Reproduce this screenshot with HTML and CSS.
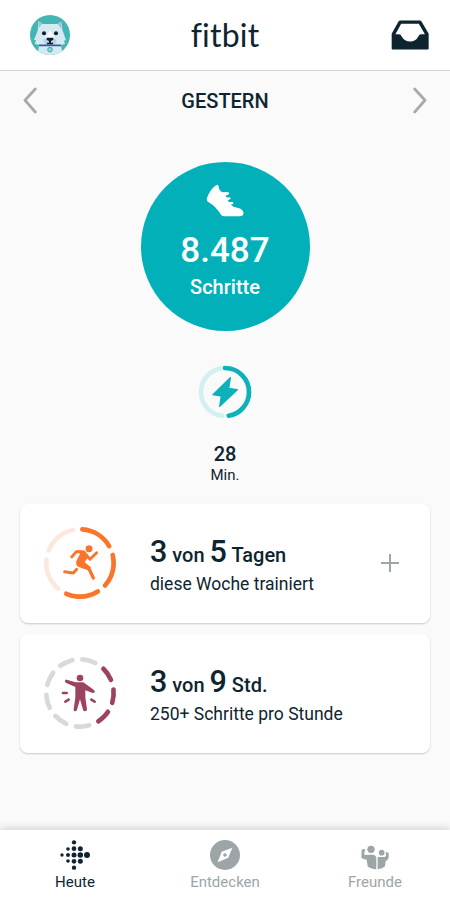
FILE: index.html
```html
<!DOCTYPE html>
<html lang="de">
<head>
<meta charset="utf-8">
<title>fitbit</title>
<link rel="stylesheet" href="styles.css">
</head>
<body>
<header class="topbar">
  <svg class="avatar" viewBox="90 44 120 120">
    <defs><clipPath id="round"><circle cx="150" cy="104" r="60"/></clipPath></defs>
    <g clip-path="url(#round)">
      <rect x="90" y="44" width="120" height="120" fill="#43b5b3"/>
      <path d="M115 62L128 71H172L184 64L187 88L198 119L192 121L195 131L183 134L188 170H112L117 134L104 130L108 120L102 118L113 91Z" fill="#d3eaf3"/>
      <path d="M115 62L127 70L116 84ZM184 64L173 70L184 86Z" fill="#a9bfd5"/>
      <path d="M150 88L166 118L150 133L134 118Z" fill="#f6fbfd"/>
      <path d="M130 118Q150 108 170 118L164 134H136Z" fill="#b8cfe3"/>
      <path d="M117 135H183" stroke="#315f9d" stroke-width="5"/>
      <circle cx="132" cy="99" r="6" fill="#101d31"/><circle cx="168" cy="99" r="6" fill="#101d31"/>
      <path d="M140 112H160V118L153 122V127H159V132H141V127H147V122L140 118Z" fill="#101d31"/>
      <circle cx="150" cy="148" r="7" fill="#8bd8d2" stroke="#42aaa9" stroke-width="3"/>
    </g>
  </svg>
  <h1 class="logo">fitbit</h1>
  <svg class="inbox" viewBox="64 63 112 88">
    <path fill="#0e2530" fill-rule="evenodd" d="M91 64H149Q152 64 154 67L175 103V147Q175 150 172 150H69Q66 150 66 147V103L86 67Q88 64 91 64ZM94 74L77 105H87Q93 105 96 112Q104 126 120 126Q137 126 144 112Q147 105 153 105H164L146 74Z"/>
  </svg>
</header>

<main class="content">
  <div class="daynav">
    <svg class="chevron" viewBox="0 0 14 27"><path d="M12.3 2L2 13.3L12.3 25"/></svg>
    <h2 class="day">GESTERN</h2>
    <svg class="chevron" viewBox="0 0 14 27"><path d="M1.7 2L12 13.3L1.7 25"/></svg>
  </div>

  <section class="steps">
    <svg class="shoe" viewBox="228 102 114 100"><path fill="#fff" d="M263 104Q266 106 266 112Q268 124 278 127L290 126Q297 126 298 130Q298 133 293 135L287 137L290 143L299 142Q304 144 302 147Q300 149 293 151L298 157L307 156Q312 158 310 162L303 165Q309 172 322 174Q341 178 341 190Q341 200 329 200H283Q277 200 273 195Q256 169 237 158Q228 153 230 145Q233 134 243 120Q253 106 263 104Z"/></svg>
    <strong class="steps-value">8.487</strong>
    <span class="steps-label">Schritte</span>
  </section>

  <section class="minutes">
    <svg class="energy" viewBox="54 30 162 162">
      <g fill="none" stroke-width="14">
        <circle cx="135" cy="111" r="72" pathLength="360" stroke="#d3f0f1" stroke-dasharray="171 189" transform="rotate(92 135 111)"/>
        <circle cx="135" cy="111" r="72" pathLength="360" stroke="#0cb1ba" stroke-linecap="round" stroke-dasharray="170 190" transform="rotate(-90 135 111)"/>
      </g>
      <path d="M151 68L99 119L124 123L119 154L172 104L146 100Z" fill="#0cb1ba" stroke="#0cb1ba" stroke-width="4" stroke-linejoin="round"/>
    </svg>
    <strong class="min-value">28</strong>
    <span class="min-label">Min.</span>
  </section>

  <section class="card">
    <svg class="ring" viewBox="90 85 240 240">
      <g class="arcs">
        <circle cx="210" cy="205" r="101" pathLength="360" stroke="#fde8de" stroke-dasharray="56 16 56 232" transform="rotate(130 210 205)"/>
        <circle cx="210" cy="205" r="101" pathLength="360" stroke="#fb742b" stroke-dasharray="56 16 56 16 56 160" transform="rotate(-86 210 205)"/>
      </g>
      <circle cx="237" cy="162" r="10.5" fill="#fb742b"/>
      <g fill="none" stroke="#fb742b" stroke-linecap="round" stroke-linejoin="round">
        <path d="M185 187L199 171L221 172L240 194L260 174" stroke-width="8.5"/>
        <path d="M164 231L190 235L200 224" stroke-width="9"/>
        <path d="M208 209L236 220L250 250" stroke-width="10"/>
      </g>
      <path fill="#fb742b" d="M200 167L223 168L236 184L224 203L243 218L234 227L206 217Q194 211 200 197L210 178Z"/>
    </svg>
    <div class="card-text">
      <p class="goal"><b>3</b> von <b>5</b> Tagen</p>
      <p class="desc">diese Woche trainiert</p>
    </div>
    <svg class="plus" viewBox="0 0 18 18"><path d="M9 0V18M0 9H18"/></svg>
  </section>

  <section class="card">
    <svg class="ring" viewBox="90 85 240 240">
      <g class="arcs">
        <circle cx="210" cy="205" r="101" pathLength="360" stroke="#d9d9d9" stroke-dasharray="23 17 23 17 23 17 23 17 23 17 23 137" transform="rotate(74 210 205)"/>
        <circle cx="210" cy="205" r="101" pathLength="360" stroke="#9d4362" stroke-dasharray="23 17 23 17 23 257" transform="rotate(-46 210 205)"/>
      </g>
      <g fill="#9d4362">
        <circle cx="210" cy="160" r="10"/>
        <path d="M170 165L197 173H220L251 195Q256 199 254 203Q251 206 246 204L226 197V218L231 254Q231 260 225 260Q220 260 219 255L210 224L201 255Q200 260 195 260Q190 260 191 254L196 218V187L169 175Q164 172 165 168Q167 164 170 165Z"/>
      </g>
      <path d="M159 205H170M166 231L176 225M244 225L254 231" fill="none" stroke="#9d4362" stroke-width="8" stroke-linecap="round"/>
    </svg>
    <div class="card-text">
      <p class="goal"><b>3</b> von <b>9</b> Std.</p>
      <p class="desc">250+ Schritte pro Stunde</p>
    </div>
  </section>
</main>

<nav class="tabs">
  <a class="tab active">
    <svg viewBox="57 57 96 96" fill="#0e2530">
      <circle cx="66" cy="105" r="5"/><circle cx="84" cy="87" r="5.5"/><circle cx="84" cy="105" r="6"/><circle cx="84" cy="123" r="5.5"/>
      <circle cx="102" cy="67" r="6.5"/><circle cx="102" cy="86" r="7"/><circle cx="102" cy="105" r="7.5"/><circle cx="102" cy="124" r="7"/><circle cx="102" cy="143" r="6.5"/>
      <circle cx="121" cy="86" r="7.5"/><circle cx="121" cy="105" r="8.3"/><circle cx="121" cy="124" r="7.5"/><circle cx="141" cy="105" r="9"/>
    </svg>
    <span>Heute</span>
  </a>
  <a class="tab">
    <svg viewBox="87 57 96 96"><circle cx="135" cy="105" r="45" fill="#9da5a8"/><path d="M157 83L145 113L113 127L125 95Z" fill="#fff"/><circle cx="135" cy="105" r="5.5" fill="#9da5a8"/></svg>
    <span>Entdecken</span>
  </a>
  <a class="tab">
    <svg viewBox="72 55 96 96" fill="#9da5a8">
      <circle cx="108" cy="86" r="11"/><circle cx="140" cy="96" r="8.5"/>
      <path d="M80 87L88 84L91 89L88 94V102Q92 104 98 102H115Q123 103 124 111V146Q106 145 98 137L95 117Q80 116 79 109Z"/>
      <path d="M128 109H147Q151 109 153 105L152 98L155 94L161 97V111Q159 118 152 121L150 137Q143 144 128 146Z"/>
    </svg>
    <span>Freunde</span>
  </a>
</nav>
</body>
</html>
```
FILE: styles.css
```css
* { box-sizing: border-box; margin: 0; padding: 0; }
body {
  width: 450px; height: 900px; overflow: hidden;
  display: flex; flex-direction: column;
  background: #fafafa; color: #0e2530;
  font-family: Roboto, "Liberation Sans", sans-serif;
}
svg { display: block; flex: none; }
.topbar {
  height: 71px; flex: none; padding: 0 21px 0 30px;
  display: grid; grid-template-columns: 40px 1fr 38px; align-items: center;
  background: #fff; border-bottom: 1px solid #d6d6d6;
}
.avatar { width: 40px; height: 40px; }
.logo {
  font: 400 32px/40px Lato, sans-serif; letter-spacing: .2px;
  text-align: center; padding-right: 11px;
}
.inbox { width: 38px; height: 30px; }
.content { flex: 1; display: flex; flex-direction: column; align-items: center; }
.daynav {
  width: 100%; height: 59px; padding: 0 23px;
  display: flex; align-items: center; justify-content: space-between;
}
.chevron { width: 14px; height: 27px; fill: none; stroke: #aaa; stroke-width: 2.8; stroke-linecap: round; stroke-linejoin: round; }
.day { font-size: 20px; font-weight: 500; line-height: 24px; }
.steps {
  width: 169px; height: 169px; margin-top: 32px; padding-top: 22px;
  display: flex; flex-direction: column; align-items: center;
  border-radius: 50%; background: #02b0b9; color: #fff;
}
.shoe { width: 38px; height: 33px; }
.steps-value { margin-top: 13px; font-size: 35px; font-weight: 500; line-height: 42px; }
.steps-label { margin-top: 3px; font-size: 20px; font-weight: 500; line-height: 24px; }
.minutes { margin-top: 34px; display: flex; flex-direction: column; align-items: center; }
.energy { width: 54px; height: 54px; }
.min-value { margin-top: 23px; font-size: 20px; font-weight: 500; line-height: 24px; }
.min-label { font-size: 15px; line-height: 18px; }
.card {
  width: 410px; height: 119px; padding: 0 31px 1px 20px; margin-bottom: 11px;
  display: flex; align-items: center;
  background: #fff; border-radius: 8px; box-shadow: 0 1px 2px rgba(0,0,0,.2);
}
.minutes + .card { margin-top: 20px; }
.ring { width: 80px; height: 80px; }
.arcs { fill: none; stroke-width: 14; stroke-linecap: round; }
.card-text { flex: 1; margin-left: 30px; }
.goal { padding-top: 2px; font-size: 20px; font-weight: 500; line-height: 36px; }
.goal b { font-size: 30.5px; font-weight: 500; }
.desc { font-size: 17.5px; line-height: 22px; }
.plus { width: 18px; height: 18px; fill: none; stroke: #9ea6a9; stroke-width: 2; }
.tabs {
  height: 70px; flex: none; padding-top: 9px;
  display: grid; grid-template-columns: repeat(3, 1fr);
  background: #fff; box-shadow: 0 -2px 8px rgba(0,0,0,.16);
}
.tab { display: flex; flex-direction: column; align-items: center; gap: 2px; font-size: 15px; line-height: 18px; color: #9da5a8; }
.tab svg { width: 32px; height: 32px; }
.tab.active { color: #0e2530; }
```
